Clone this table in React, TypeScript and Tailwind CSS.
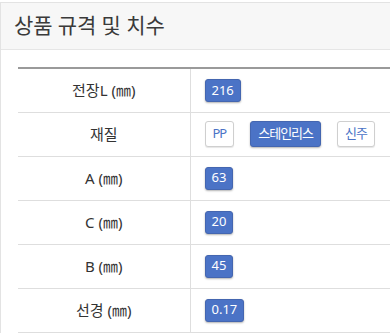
const FONT = "font-['Noto_Sans','Noto_Sans_CJK_KR',sans-serif]"

type Row = { label: string; values: { text: string; active: boolean }[] }

const ROWS: Row[] = [
  { label: '전장L (㎜)', values: [{ text: '216', active: true }] },
  {
    label: '재질',
    values: [
      { text: 'PP', active: false },
      { text: '스테인리스', active: true },
      { text: '신주', active: false },
    ],
  },
  { label: 'A (㎜)', values: [{ text: '63', active: true }] },
  { label: 'C (㎜)', values: [{ text: '20', active: true }] },
  { label: 'B (㎜)', values: [{ text: '45', active: true }] },
  { label: '선경 (㎜)', values: [{ text: '0.17', active: true }] },
]

export default function App() {
  return (
    <div className={`w-[390px] h-[335px] overflow-hidden bg-white pt-[2px] ${FONT}`}>
      <div className="w-[430px] border-l border-t border-[#e3e3e3] bg-white">
        <header className="h-[47px] bg-[#f7f7f7] border-b border-[#e6e6e6] flex items-center pl-[13px]">
          <h2 className="text-[21px] text-[#3a3a3a] tracking-[-0.1px]">상품 규격 및 치수</h2>
        </header>
        <div className="pl-[17px] pt-[17px]">
          <table className="w-full border-collapse border-t-2 border-[#9a9a9a]">
            <tbody>
              {ROWS.map((row) => (
                <tr key={row.label} className="h-[44px] border-b border-[#dedede]">
                  <td className="w-[172px] border-r border-[#dedede] text-center text-[15px] text-[#333]">
                    {row.label}
                  </td>
                  <td className="pl-[14px]">
                    <div className="flex items-center gap-[16px]">
                      {row.values.map((v) => (
                        <Chip key={v.text} text={v.text} active={v.active} tall={row.values.length > 1} />
                      ))}
                    </div>
                  </td>
                </tr>
              ))}
            </tbody>
          </table>
        </div>
      </div>
    </div>
  )
}

function Chip({ text, active, tall }: { text: string; active: boolean; tall: boolean }) {
  const size = tall ? 'h-[26px] px-[7px] tracking-[-1px]' : 'h-[23px] px-[6px]'
  if (active) {
    return (
      <span
        className={`${size} inline-flex items-center rounded-[3px] border border-[#4466b0] bg-[#4b73c6] text-[13px] text-white shadow-[0_1px_2px_rgba(0,0,0,0.3)]`}
      >
        {text}
      </span>
    )
  }
  return (
    <span
      className={`${size} inline-flex items-center rounded-[3px] border border-[#cfcfcf] bg-white text-[13px] text-[#4b73c6] shadow-[0_1px_1px_rgba(0,0,0,0.1)]`}
    >
      {text}
    </span>
  )
}
